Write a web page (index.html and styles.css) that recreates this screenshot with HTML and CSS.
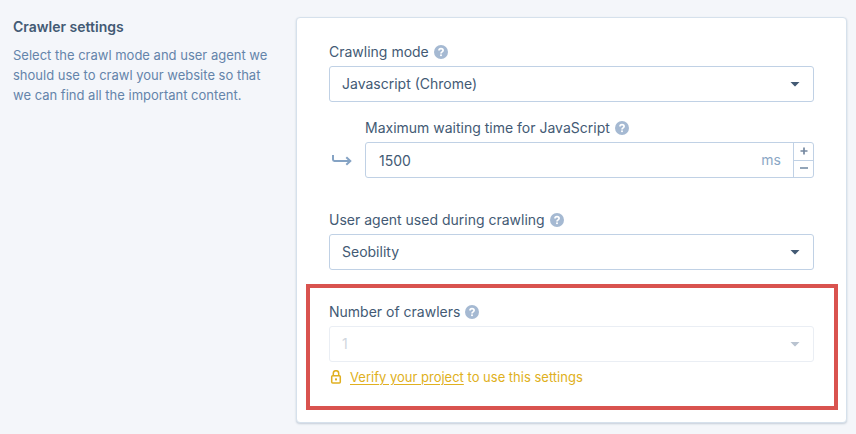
FILE: index.html
```html
<!DOCTYPE html>
<html lang="en">
<head>
<meta charset="utf-8">
<title>Crawler settings</title>
<link rel="stylesheet" href="styles.css">
</head>
<body>
<svg class="sprite" aria-hidden="true">
  <symbol id="help" viewBox="0 0 14 14">
    <circle cx="7" cy="7" r="7" fill="#a5b9d2"/>
    <path d="M5 5.6C5 4.3 5.9 3.7 7 3.7S9.1 4.4 9.1 5.5C9.1 6.9 7 6.8 7 8.4" fill="none" stroke="#fff" stroke-width="1.7"/>
    <circle cx="7" cy="10.3" r="1" fill="#fff"/>
  </symbol>
  <symbol id="caret" viewBox="0 0 10 5">
    <path d="M0.5 0h9L5.6 4.1Q5 4.7 4.4 4.1z" fill="currentColor"/>
  </symbol>
</svg>
<main class="settings">
  <header class="intro">
    <h1 class="intro-title">Crawler settings</h1>
    <p class="intro-text">Select the crawl mode and user agent we should use to crawl your website so that we can find all the important content.</p>
  </header>
  <form class="card">
    <div class="field">
      <div class="label-row"><label for="mode">Crawling mode</label><svg class="help"><use href="#help"/></svg></div>
      <div class="select-wrap">
        <select class="control" id="mode"><option>Javascript (Chrome)</option></select>
        <svg class="caret"><use href="#caret"/></svg>
      </div>
    </div>
    <div class="nested">
      <svg class="arrow" viewBox="0 0 20 12"><path d="M1 0v4.6Q1 6 2.4 6H18.5M14.3 2.2L18.3 6l-4 3.8" fill="none" stroke="#85a3c4" stroke-width="2"/></svg>
      <div class="field">
        <div class="label-row"><label for="wait">Maximum waiting time for JavaScript</label><svg class="help"><use href="#help"/></svg></div>
        <div class="control number">
          <input class="number-input" id="wait" type="text" inputmode="numeric" value="1500">
          <span class="unit">ms</span>
          <div class="stepper">
            <button class="step" type="button" aria-label="Increase"><svg class="step-icon" viewBox="0 0 8 8"><path d="M0.5 4h7M4 0.5v7" stroke="#7588a0" stroke-width="1.7"/></svg></button>
            <button class="step" type="button" aria-label="Decrease"><svg class="step-icon" viewBox="0 0 8 8"><path d="M0 4h8" stroke="#93a5b8" stroke-width="2"/></svg></button>
          </div>
        </div>
      </div>
    </div>
    <div class="field field-spaced">
      <div class="label-row"><label for="agent">User agent used during crawling</label><svg class="help"><use href="#help"/></svg></div>
      <div class="select-wrap">
        <select class="control" id="agent"><option>Seobility</option></select>
        <svg class="caret"><use href="#caret"/></svg>
      </div>
    </div>
    <div class="field highlight">
      <div class="label-row"><label for="crawlers">Number of crawlers</label><svg class="help"><use href="#help"/></svg></div>
      <div class="select-wrap disabled">
        <select class="control" id="crawlers" disabled><option>1</option></select>
        <svg class="caret"><use href="#caret"/></svg>
      </div>
      <p class="notice">
        <svg class="lock" viewBox="0 0 14 14"><g fill="none" stroke="#e0b020" stroke-width="1.5"><rect x="2.7" y="5.7" width="8.6" height="7.3" rx="1"/><path d="M4.3 5.7V3.4a2.7 2.7 0 0 1 5.4 0V5.7"/></g><rect x="6" y="8.4" width="2" height="2" fill="#e0b020"/></svg>
        <span><a class="notice-link" href="#verify">Verify your project</a> to use this settings</span>
      </p>
    </div>
  </form>
</main>
</body>
</html>
```
FILE: styles.css
```css
* {
  box-sizing: border-box;
}

body {
  margin: 0;
  background: #f4f6fa;
  color: #435a74;
  font: 14px/20px Inter, "Liberation Sans", sans-serif;
}

h1,
p {
  margin: 0;
}

.sprite {
  display: none;
}

.settings {
  display: grid;
  grid-template-columns: 260px minmax(0, 1fr);
  gap: 23px;
  align-items: start;
  padding: 17px 9px 10px 13px;
}

.intro-title {
  font-size: 14px;
  font-weight: 600;
  line-height: 20px;
}

.intro-text {
  margin-top: 8px;
  color: #6484aa;
  font-size: 13px;
}

.card {
  padding: 24px 32px 12px;
  background: #fff;
  border: 1px solid #d6e1ec;
  border-radius: 4px;
  box-shadow: 0 1px 2px rgba(60, 90, 120, 0.25);
}

.label-row {
  display: flex;
  align-items: center;
  gap: 5px;
  margin-bottom: 4px;
}

.help {
  width: 14px;
  height: 14px;
}

.select-wrap {
  display: grid;
  align-items: center;
}

.select-wrap > * {
  grid-area: 1 / 1;
}

.control {
  width: 100%;
  height: 36px;
  padding: 0 12px;
  appearance: none;
  background: #fff;
  border: 1px solid #c0d1e5;
  border-radius: 3px;
  color: inherit;
  font: inherit;
}

.caret {
  justify-self: end;
  width: 10px;
  height: 5px;
  margin-right: 14px;
  pointer-events: none;
}

.nested {
  display: grid;
  grid-template-columns: 20px minmax(0, 1fr);
  gap: 13px;
  align-items: end;
  margin-top: 16px;
  padding-left: 3px;
}

.arrow {
  width: 20px;
  height: 12px;
  margin-bottom: 11px;
}

.number {
  display: flex;
  align-items: center;
  padding: 0 0 0 13px;
}

.number-input {
  flex: 1;
  min-width: 0;
  padding: 2px 0 0;
  background: none;
  border: 0;
  color: inherit;
  font: inherit;
}

.unit {
  margin-right: 12px;
  color: #8ba7c5;
}

.stepper {
  display: grid;
  grid-template-rows: 1fr 1fr;
  align-self: stretch;
  width: 20px;
  border-left: 1px solid #c0d1e5;
}

.step {
  display: grid;
  place-items: center;
  padding: 0 0 2px;
  background: none;
  border: 0;
}

.step + .step {
  border-top: 1px solid #c0d1e5;
}

.step-icon {
  width: 8px;
  height: 8px;
}

.field-spaced {
  margin-top: 32px;
}

.highlight {
  margin: 14px -24px 0 -23px;
  padding: 14px 20px 19px 19px;
  border: 4px solid #d9534f;
}

.disabled {
  color: #b9c3d0;
}

.disabled .control {
  border-color: #eaeef4;
  color: #d0d6de;
  opacity: 1;
}

.notice {
  display: flex;
  align-items: center;
  gap: 7px;
  margin-top: 5px;
  color: #e0b020;
  font-size: 13px;
}

.lock {
  width: 14px;
  height: 14px;
}

.notice-link {
  color: inherit;
  text-underline-offset: 2px;
}
```
